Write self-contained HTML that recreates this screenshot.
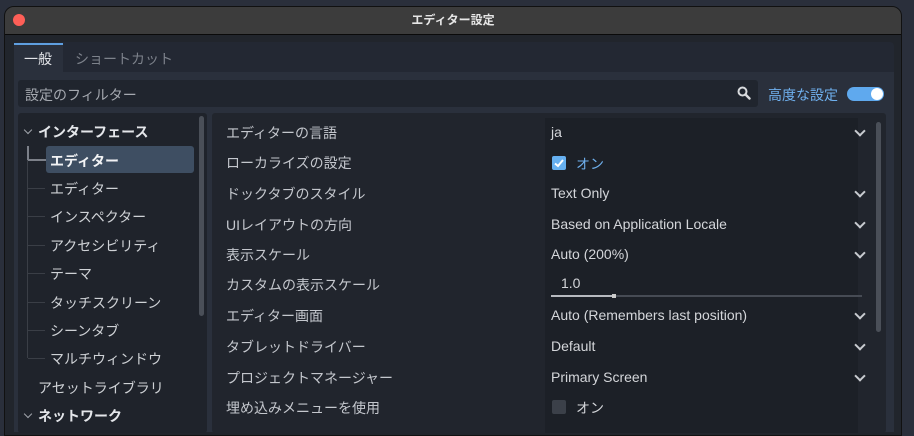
<!DOCTYPE html>
<html><head><meta charset="utf-8"><style>
*{margin:0;padding:0;box-sizing:border-box}
body{width:914px;height:428px;overflow:hidden;background:#2a2f3b;font-family:"Liberation Sans","Noto Sans CJK JP",sans-serif;position:relative;font-size:14px;color:#cdd0d5}
.abs{position:absolute}
#win{left:4px;top:6px;width:898px;height:430px;background:#21252c;border-radius:10px 10px 0 0;overflow:hidden;border:1px solid #111}
#title{left:0;top:0;width:100%;height:28px;background:#3c3c3c;border-bottom:1px solid #0a0a0a;text-align:center;font-size:12px;line-height:27px;color:#e6e6e6;font-weight:bold}
.dot{left:8px;top:7px;width:12px;height:12px;border-radius:50%;background:#fe5f57}
.t{position:absolute;white-space:nowrap}
.row{position:absolute;left:226px;font-size:14px;color:#c4c7cd}
.val{position:absolute;left:551px;font-size:14px;color:#d4d6da}
.chev{position:absolute;left:856px;width:8px;height:8px;border-right:2px solid #c8cbd0;border-bottom:2px solid #c8cbd0;transform:rotate(45deg)}
.tr{position:absolute;font-size:14px;color:#cfd2d6}
</style></head><body>
<div id="win" class="abs">
<div id="title" class="abs">エディター設定</div>
<div class="abs dot"></div>
</div>
<!-- tab bar area -->
<div class="abs" style="left:14px;top:42px;width:880px;height:30px;background:#232833;border-radius:4px 4px 0 0"></div>
<div class="abs" style="left:14px;top:43px;width:49px;height:29px;background:#2a303c;border-top:2px solid #5f9fe0"></div>
<div class="t" style="left:24px;top:49px;font-size:14px;color:#e2e4e8">一般</div>
<div class="t" style="left:75px;top:49px;font-size:14px;color:#7d828b">ショートカット</div>
<!-- main panel -->
<div class="abs" style="left:14px;top:72px;width:880px;height:360px;background:#2a303c"></div>
<div class="abs" style="left:18px;top:80px;width:740px;height:27px;background:#20252e;border-radius:3px"></div>
<div class="t" style="left:25px;top:85px;font-size:14px;color:#a5a9b0">設定のフィルター</div>
<svg class="abs" style="left:737px;top:86px" width="14" height="14" viewBox="0 0 14 14"><circle cx="5.5" cy="5.5" r="4" fill="none" stroke="#d8dadd" stroke-width="2"/><path d="M8.5 8.5L12.5 12.5" stroke="#d8dadd" stroke-width="2.4" stroke-linecap="round"/></svg>
<div class="t" style="left:768px;top:85px;font-size:14px;color:#6fb0ee">高度な設定</div>
<div class="abs" style="left:847px;top:87px;width:37px;height:14px;border-radius:7px;background:#5fa9ee"></div>
<div class="abs" style="left:871px;top:88px;width:12px;height:12px;border-radius:50%;background:#fff"></div>
<!-- tree -->
<div class="abs" style="left:18px;top:113px;width:189px;height:320px;background:#1f232b;border-radius:3px"></div>
<div class="abs" style="left:199px;top:116px;width:5px;height:200px;background:#4a4f58;border-radius:3px"></div>
<div class="abs" style="left:46px;top:146px;width:148px;height:27px;background:#3e4e62;border-radius:3px"></div>
<div class="abs" style="left:27px;top:146px;width:2px;height:14px;background:#7c8089"></div>
<div class="abs" style="left:27px;top:159px;width:19px;height:2px;background:#7c8089"></div>
<div class="abs" style="left:27px;top:160px;width:1px;height:198px;background:#3a3e46"></div>
<div class="abs" style="left:28px;top:188px;width:17px;height:1px;background:#3a3e46"></div>
<div class="abs" style="left:28px;top:216px;width:17px;height:1px;background:#3a3e46"></div>
<div class="abs" style="left:28px;top:245px;width:17px;height:1px;background:#3a3e46"></div>
<div class="abs" style="left:28px;top:273px;width:17px;height:1px;background:#3a3e46"></div>
<div class="abs" style="left:28px;top:302px;width:17px;height:1px;background:#3a3e46"></div>
<div class="abs" style="left:28px;top:330px;width:17px;height:1px;background:#3a3e46"></div>
<div class="abs" style="left:28px;top:358px;width:17px;height:1px;background:#3a3e46"></div>
<div class="abs" style="left:25px;top:127px;width:6px;height:6px;border-right:1.5px solid #a0a4ab;border-bottom:1.5px solid #a0a4ab;transform:rotate(45deg)"></div>
<div class="abs" style="left:25px;top:411px;width:6px;height:6px;border-right:1.5px solid #a0a4ab;border-bottom:1.5px solid #a0a4ab;transform:rotate(45deg)"></div>
<div class="tr" style="left:38px;top:122px;font-weight:bold;color:#e4e6ea">インターフェース</div>
<div class="tr" style="left:50px;top:151px;font-weight:bold;color:#f2f3f5">エディター</div>
<div class="tr" style="left:50px;top:179px">エディター</div>
<div class="tr" style="left:50px;top:207px">インスペクター</div>
<div class="tr" style="left:50px;top:236px">アクセシビリティ</div>
<div class="tr" style="left:50px;top:264px">テーマ</div>
<div class="tr" style="left:50px;top:293px">タッチスクリーン</div>
<div class="tr" style="left:50px;top:321px">シーンタブ</div>
<div class="tr" style="left:50px;top:349px">マルチウィンドウ</div>
<div class="tr" style="left:38px;top:378px">アセットライブラリ</div>
<div class="tr" style="left:38px;top:406px;font-weight:bold;color:#e4e6ea">ネットワーク</div>
<!-- right -->
<div class="abs" style="left:212px;top:113px;width:674px;height:320px;background:#21252d;border-radius:3px"></div>
<div class="abs" style="left:545px;top:118px;width:313px;height:315px;background:#1c2027"></div>
<div class="abs" style="left:876px;top:122px;width:5px;height:210px;background:#4a4f58;border-radius:3px"></div>
<div class="row" style="top:123px">エディターの言語</div>
<div class="row" style="top:153px">ローカライズの設定</div>
<div class="row" style="top:184px">ドックタブのスタイル</div>
<div class="row" style="top:215px">UIレイアウトの方向</div>
<div class="row" style="top:245px">表示スケール</div>
<div class="row" style="top:275px">カスタムの表示スケール</div>
<div class="row" style="top:306px">エディター画面</div>
<div class="row" style="top:337px">タブレットドライバー</div>
<div class="row" style="top:368px">プロジェクトマネージャー</div>
<div class="row" style="top:398px">埋め込みメニューを使用</div>
<div class="val" style="top:124px">ja</div><div class="chev" style="top:127px"></div>
<div class="abs" style="left:552px;top:156px;width:14px;height:14px;background:#66b0f0;border-radius:2px"></div>
<svg class="abs" style="left:552px;top:156px" width="14" height="14"><path d="M3 7.5L6 10L11 4" stroke="#fff" stroke-width="2" fill="none"/></svg>
<div class="val" style="left:576px;top:154px;color:#6fb0ee">オン</div>
<div class="val" style="top:185px">Text Only</div><div class="chev" style="top:188px"></div>
<div class="val" style="top:216px">Based on Application Locale</div><div class="chev" style="top:219px"></div>
<div class="val" style="top:246px">Auto (200%)</div><div class="chev" style="top:249px"></div>
<div class="val" style="left:561px;top:275px">1.0</div>
<div class="abs" style="left:551px;top:295px;width:311px;height:2px;background:#464b54"></div>
<div class="abs" style="left:551px;top:295px;width:63px;height:2px;background:#b7bac0"></div>
<div class="abs" style="left:612px;top:294px;width:4px;height:4px;background:#ccc"></div>
<div class="val" style="top:307px">Auto (Remembers last position)</div><div class="chev" style="top:310px"></div>
<div class="val" style="top:338px">Default</div><div class="chev" style="top:341px"></div>
<div class="val" style="top:369px">Primary Screen</div><div class="chev" style="top:372px"></div>
<div class="abs" style="left:552px;top:400px;width:14px;height:14px;background:#3b4049;border-radius:2px"></div>
<div class="val" style="left:576px;top:398px">オン</div>
</body></html>
